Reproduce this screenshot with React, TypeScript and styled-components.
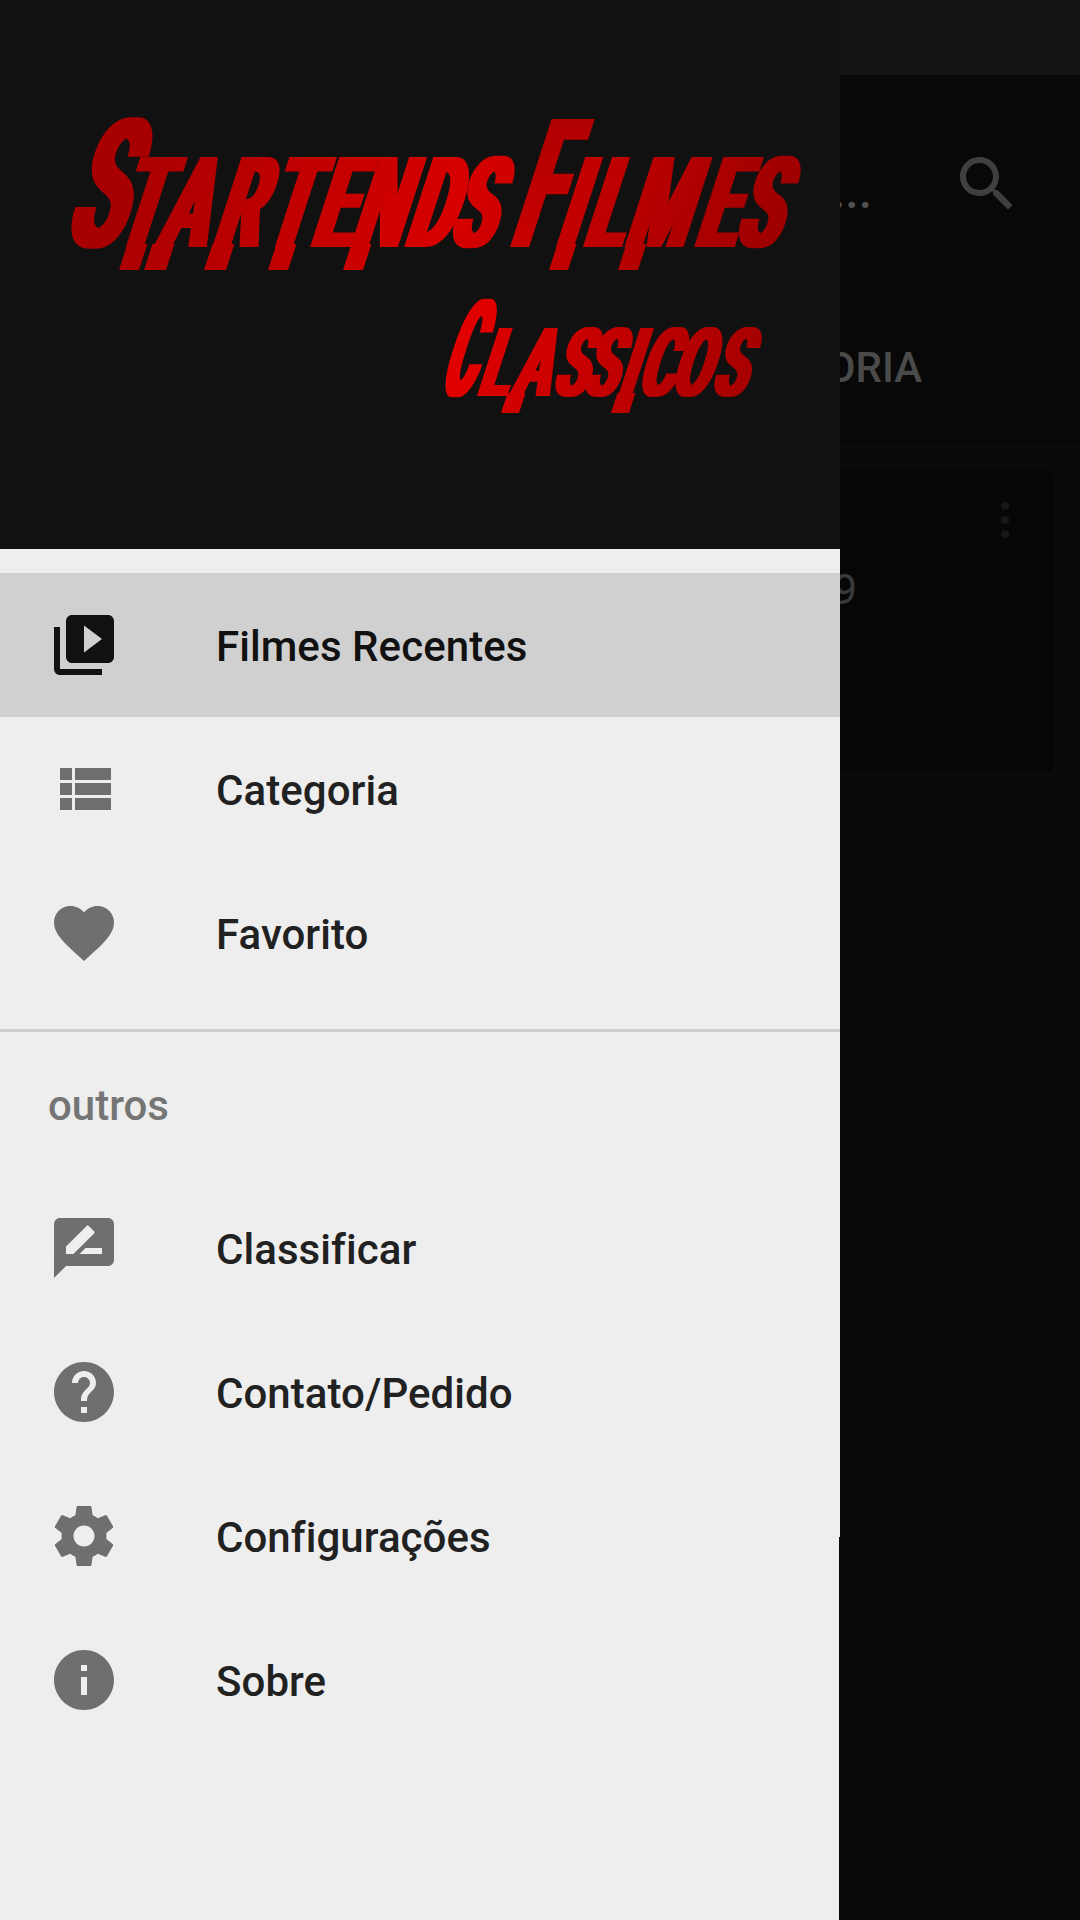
import React from "react";
import styled, { createGlobalStyle } from "styled-components";

const Global = createGlobalStyle`
  html, body { margin: 0; padding: 0; background: #0a0a0a; }
  #root { width: 1080px; height: 1920px; }
`;

const Screen = styled.div`
  position: relative;
  width: 1080px;
  height: 1920px;
  overflow: hidden;
  background: #0a0a0a;
  font-family: Roboto, "Liberation Sans", sans-serif;
`;

const StatusBar = styled.div`
  height: 75px;
  background: #141414;
`;

const Toolbar = styled.header`
  height: 195px;
  box-sizing: border-box;
  padding: 73px 57px 0 0;
  display: flex;
  align-items: flex-start;
  background: #080808;
`;

const ToolbarTitle = styled.div`
  flex: 1;
  padding: 8px 79px 0 0;
  text-align: right;
  font-size: 48px;
  line-height: 72px;
  font-weight: 500;
  color: #505050;
  white-space: nowrap;
`;

const GhostIcon = styled.svg`
  width: 72px;
  height: 72px;
  fill: #3f3f3f;
  flex: none;
`;

const Tabs = styled.nav`
  height: 175px;
  box-sizing: border-box;
  padding: 73px 158px 0 0;
  display: flex;
  justify-content: flex-end;
  background: #080808;
`;

const TabLabel = styled.span`
  font-size: 42px;
  line-height: 50px;
  font-weight: 500;
  color: #4a4a4a;
`;

const Card = styled.article`
  position: relative;
  margin: 25px 27px 0 0;
  height: 302px;
  box-sizing: border-box;
  padding: 95px 196px 0 0;
  text-align: right;
  background: #060606;
  border-radius: 6px;
  font-size: 42px;
  line-height: 50px;
  color: #3a3a3a;
`;

const CardMenu = styled.div`
  position: absolute;
  right: 44px;
  top: 32px;
  display: flex;
  flex-direction: column;
  gap: 6px;
`;

const CardDot = styled.i`
  width: 8px;
  height: 8px;
  border-radius: 50%;
  background: #171717;
`;

const Drawer = styled.aside`
  position: absolute;
  left: 0;
  top: 0;
  width: 840px;
  height: 1920px;
  background: #eeeeee;
  display: flex;
  flex-direction: column;
`;

const DrawerEdge = styled.div`
  position: absolute;
  left: 839px;
  top: 1537px;
  width: 1px;
  height: 383px;
  background: #0a0a0a;
`;

const DrawerHeader = styled.div`
  height: 549px;
  flex: none;
  background: #111111;
`;

const LogoArt = styled.svg`
  display: block;
  width: 840px;
  height: 549px;
`;

const Nav = styled.nav`
  padding-top: 24px;
  display: flex;
  flex-direction: column;
`;

const Row = styled.div<{ $active?: boolean }>`
  height: 144px;
  flex: none;
  display: flex;
  align-items: center;
  padding-left: 48px;
  gap: 96px;
  background: ${(p) => (p.$active ? "#d0d0d0" : "transparent")};
  color: ${(p) => (p.$active ? "#111111" : "#212121")};
  font-size: 42px;
  font-weight: 500;
  letter-spacing: 0.06px;
`;

const RowLabel = styled.span`
  padding-top: 2px;
`;

const RowIcon = styled.svg<{ $active?: boolean }>`
  width: 72px;
  height: 72px;
  flex: none;
  fill: ${(p) => (p.$active ? "#111111" : "#6f6f6f")};
`;

const Divider = styled.hr`
  margin: 24px 0 0;
  border: 0;
  height: 3px;
  background: #cfcfcf;
`;

const Subheader = styled.div`
  height: 144px;
  flex: none;
  box-sizing: border-box;
  padding: 2px 0 0 48px;
  display: flex;
  align-items: center;
  font-size: 42px;
  font-weight: 500;
  color: #757575;
`;

const ICONS: Record<string, string> = {
  video:
    "M4 6H2v14c0 1.1.9 2 2 2h14v-2H4V6zm16-4H8c-1.1 0-2 .9-2 2v12c0 1.1.9 2 2 2h12c1.1 0 2-.9 2-2V4c0-1.1-.9-2-2-2zm-8 12.5v-9l6 4.5-6 4.5z",
  list: "M4 14h4v-4H4v4zm0 5h4v-4H4v4zM4 9h4V5H4v4zm5 5h12v-4H9v4zm0 5h12v-4H9v4zM9 5v4h12V5H9z",
  heart:
    "M12 21.35l-1.45-1.32C5.4 15.36 2 12.28 2 8.5 2 5.42 4.42 3 7.5 3c1.74 0 3.41.81 4.5 2.09C13.09 3.81 14.76 3 16.5 3 19.58 3 22 5.42 22 8.5c0 3.78-3.4 6.86-8.55 11.54L12 21.35z",
  rate: "M20 2H4c-1.1 0-1.99.9-1.99 2L2 22l4-4h14c1.1 0 2-.9 2-2V4c0-1.1-.9-2-2-2zM6 14v-2.47l6.88-6.88c.2-.2.51-.2.71 0l1.77 1.77c.2.2.2.51 0 .71L8.47 14H6zm12 0h-7.5l2-2H18v2z",
  help: "M12 2C6.48 2 2 6.48 2 12s4.48 10 10 10 10-4.48 10-10S17.52 2 12 2zm1 17h-2v-2h2v2zm2.07-7.75l-.9.92C13.45 12.9 13 13.5 13 15h-2v-.5c0-1.1.45-2.1 1.17-2.83l1.24-1.26c.37-.36.59-.86.59-1.41 0-1.1-.9-2-2-2s-2 .9-2 2H8c0-2.21 1.79-4 4-4s4 1.79 4 4c0 .88-.36 1.68-.93 2.25z",
  gear: "M19.43 12.98c.04-.32.07-.64.07-.98s-.03-.66-.07-.98l2.11-1.65c.19-.15.24-.42.12-.64l-2-3.46c-.12-.22-.39-.3-.61-.22l-2.49 1c-.52-.4-1.08-.73-1.69-.98l-.38-2.65C14.46 2.18 14.25 2 14 2h-4c-.25 0-.46.18-.49.42l-.38 2.65c-.61.25-1.17.59-1.69.98l-2.49-1c-.23-.09-.49 0-.61.22l-2 3.46c-.13.22-.07.49.12.64l2.11 1.65c-.04.32-.07.65-.07.98s.03.66.07.98l-2.11 1.65c-.19.15-.24.42-.12.64l2 3.46c.12.22.39.3.61.22l2.49-1c.52.4 1.08.73 1.69.98l.38 2.65c.03.24.24.42.49.42h4c.25 0 .46-.18.49-.42l.38-2.65c.61-.25 1.17-.59 1.69-.98l2.49 1c.23.09.49 0 .61-.22l2-3.46c.12-.22.07-.49-.12-.64l-2.11-1.65zM12 15.5c-1.93 0-3.5-1.57-3.5-3.5s1.57-3.5 3.5-3.5 3.5 1.57 3.5 3.5-1.57 3.5-3.5 3.5z",
  info: "M12 2C6.48 2 2 6.48 2 12s4.48 10 10 10 10-4.48 10-10S17.52 2 12 2zm1 15h-2v-6h2v6zm0-8h-2V7h2v2z",
};

const MenuRow = ({ icon, label, active }: { icon: string; label: string; active?: boolean }) => (
  <Row $active={active}>
    <RowIcon $active={active} viewBox="0 0 24 24">
      <path d={ICONS[icon]} />
    </RowIcon>
    <RowLabel>{label}</RowLabel>
  </Row>
);

// Logo lettering: real text, condensed, slanted, then fattened horizontally by a filter.
const TILT = 0.325;
const skew = (y: number, sx: number) => `translate(0 ${y}) skewX(-18) scale(${sx} 1)`;
const xs = (a: number[], sx: number) => a.map((v) => v / sx).join(" ");

const Stem = ({ x, y1, w, sx }: { x: number; y1: number; w: number; sx: number }) => (
  <rect x={(x + y1 * TILT) / sx} y={-3} width={w / sx} height={y1 + 3} />
);

const LINE1 = 0.54;
const LINE2 = 0.56;

const Logo = () => (
  <LogoArt viewBox="5 0 840 549">
    <defs>
      <filter id="fattenTop" filterUnits="userSpaceOnUse" x="0" y="0" width="850" height="549" colorInterpolationFilters="sRGB">
        <feMorphology operator="dilate" radius="4 0" />
        <feGaussianBlur stdDeviation="0.5" />
      </filter>
      <filter id="fattenBottom" filterUnits="userSpaceOnUse" x="0" y="0" width="850" height="549" colorInterpolationFilters="sRGB">
        <feMorphology operator="dilate" radius="3 0" />
        <feGaussianBlur stdDeviation="0.5" />
      </filter>
      <linearGradient id="redTop" gradientUnits="userSpaceOnUse" x1={73 / LINE1} y1="0" x2={790 / LINE1} y2="0">
        <stop offset="0" stopColor="#a40000" />
        <stop offset="0.52" stopColor="#d60000" />
        <stop offset="1" stopColor="#9c0000" />
      </linearGradient>
      <linearGradient id="redBottom" gradientUnits="userSpaceOnUse" x1={440 / LINE2} y1="0" x2={750 / LINE2} y2="0">
        <stop offset="0" stopColor="#e00000" />
        <stop offset="1" stopColor="#a60000" />
      </linearGradient>
      <linearGradient id="redF" x1="0" y1="0" x2="0" y2="1">
        <stop offset="0" stopColor="#a80000" />
        <stop offset="1" stopColor="#d00000" />
      </linearGradient>
    </defs>
    <g fontFamily="Roboto, sans-serif" fontWeight="700" textAnchor="middle">
      <g filter="url(#fattenTop)">
        <g transform={skew(247, 0.5)} fill="#a80000">
          <text x={96 / 0.5} fontSize="180">S</text>
        </g>
        <g transform={skew(247, LINE1)} fill="url(#redTop)">
          <text x={xs([140, 185, 239, 289, 334, 379, 431, 474], LINE1)} fontSize="126.6">TARTENDS</text>
          <text x={xs([570, 606, 659, 718, 760], LINE1)} fontSize="126.6">ILMES</text>
          <Stem x={128} y1={23} w={12} sx={LINE1} />
          <Stem x={153} y1={23} w={14} sx={LINE1} />
          <Stem x={213} y1={23} w={14} sx={LINE1} />
          <Stem x={277} y1={23} w={12} sx={LINE1} />
          <Stem x={352} y1={23} w={12} sx={LINE1} />
          <Stem x={558} y1={23} w={11} sx={LINE1} />
          <Stem x={627} y1={23} w={12} sx={LINE1} />
        </g>
        <g transform={skew(247, 0.42)} fill="url(#redF)">
          <text x={535 / 0.42} fontSize="180">F</text>
        </g>
      </g>
      <g filter="url(#fattenBottom)">
        <g transform={skew(396, 0.36)} fill="#e00000">
          <text x={460 / 0.36} fontSize="135">C</text>
        </g>
        <g transform={skew(396, LINE2)} fill="url(#redBottom)">
          <text x={xs([496, 534, 573, 603, 630, 659, 693, 732], LINE2)} fontSize="95.6">LASSICOS</text>
          <Stem x={509} y1={17} w={12} sx={LINE2} />
          <Stem x={619} y1={17} w={12} sx={LINE2} />
        </g>
      </g>
    </g>
  </LogoArt>
);

export default function App() {
  return (
    <Screen>
      <Global />
      <StatusBar />
      <Toolbar>
        <ToolbarTitle>Startends Filmes...</ToolbarTitle>
        <GhostIcon viewBox="0 0 24 24">
          <path d="M15.5 14h-.79l-.28-.27C15.41 12.59 16 11.11 16 9.5 16 5.91 13.09 3 9.5 3S3 5.91 3 9.5 5.91 16 9.5 16c1.61 0 3.09-.59 4.23-1.57l.27.28v.79l5 4.99L20.49 19l-4.99-5zm-6 0C7.01 14 5 11.99 5 9.5S7.01 5 9.5 5 14 7.01 14 9.5 11.99 14 9.5 14z" />
        </GhostIcon>
      </Toolbar>
      <Tabs>
        <TabLabel>CATEGORIA</TabLabel>
      </Tabs>
      <Card>
        2019
        <CardMenu>
          <CardDot />
          <CardDot />
          <CardDot />
        </CardMenu>
      </Card>
      <Drawer>
        <DrawerHeader>
          <Logo />
        </DrawerHeader>
        <Nav>
          <MenuRow icon="video" label="Filmes Recentes" active />
          <MenuRow icon="list" label="Categoria" />
          <MenuRow icon="heart" label="Favorito" />
          <Divider />
          <Subheader>outros</Subheader>
          <MenuRow icon="rate" label="Classificar" />
          <MenuRow icon="help" label="Contato/Pedido" />
          <MenuRow icon="gear" label="Configurações" />
          <MenuRow icon="info" label="Sobre" />
        </Nav>
      </Drawer>
      <DrawerEdge />
    </Screen>
  );
}
